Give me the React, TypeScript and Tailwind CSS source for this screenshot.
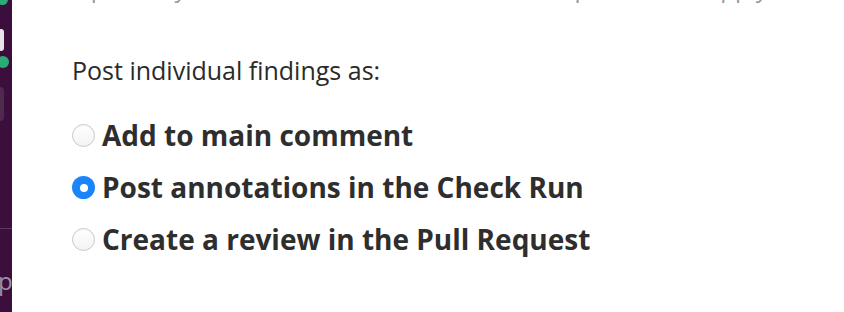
import { useState } from 'react';

const options = [
  { id: 'main', label: 'Add to main comment' },
  { id: 'check', label: 'Post annotations in the Check Run' },
  { id: 'review', label: 'Create a review in the Pull Request' },
];

function Radio({ checked }: { checked: boolean }) {
  if (checked) {
    return (
      <span className="flex h-[23px] w-[23px] shrink-0 items-center justify-center rounded-full bg-[#1a84fb]">
        <span className="h-[8px] w-[8px] rounded-full bg-white" />
      </span>
    );
  }
  return (
    <span className="h-[23px] w-[23px] shrink-0 rounded-full border border-[#c9c9c9] bg-gradient-to-b from-white to-[#f3f3f3] shadow-[inset_0_1px_1px_rgba(0,0,0,0.04)]" />
  );
}

export default function App() {
  const [selected, setSelected] = useState('check');

  return (
    <div className="flex h-[312px] w-[844px] overflow-hidden bg-white font-['Open_Sans',sans-serif]">
      {/* slack sidebar edge */}
      <div className="flex h-full w-[12px] shrink-0 flex-col overflow-hidden bg-[#3b0e3c]">
        <span className="ml-[-3px] mt-[-6px] h-[11px] w-[11px] shrink-0 rounded-full bg-[#2bac76]" />
        <span className="mt-[24px] h-[22px] w-[4px] shrink-0 rounded-r-[3px] bg-[#e8e4e8]" />
        <span className="ml-[-3px] mt-[5px] h-[12px] w-[12px] shrink-0 rounded-full bg-[#2bac76]" />
        <span className="mt-[19px] h-[34px] w-[4px] shrink-0 rounded-r-[4px] bg-[#4d2a4e]" />
        <span className="mt-[107px] h-px w-full shrink-0 bg-[#5c3b5d]" />
        <span className="ml-[-2px] mt-[40px] text-[24px] leading-[24px] text-[#a08fa0]">p</span>
      </div>

      <div className="flex-1 pl-[60px]">
        <p className="mt-[-24px] whitespace-nowrap text-[24px] leading-[24px] text-[#9a9a9a]">
          Optionally choose how the results should be posted and apply.
        </p>
        <p className="mt-[55px] text-[25px] leading-[30px] text-[#2a2a2a]">Post individual findings as:</p>

        <div className="mt-[35px] flex flex-col gap-[21px]">
          {options.map((o) => (
            <label
              key={o.id}
              className="flex cursor-pointer items-center gap-[7px]"
              onClick={() => setSelected(o.id)}
            >
              <Radio checked={selected === o.id} />
              <span className="text-[28px] font-bold leading-[31px] text-[#2e2e2e]">{o.label}</span>
            </label>
          ))}
        </div>
      </div>
    </div>
  );
}
